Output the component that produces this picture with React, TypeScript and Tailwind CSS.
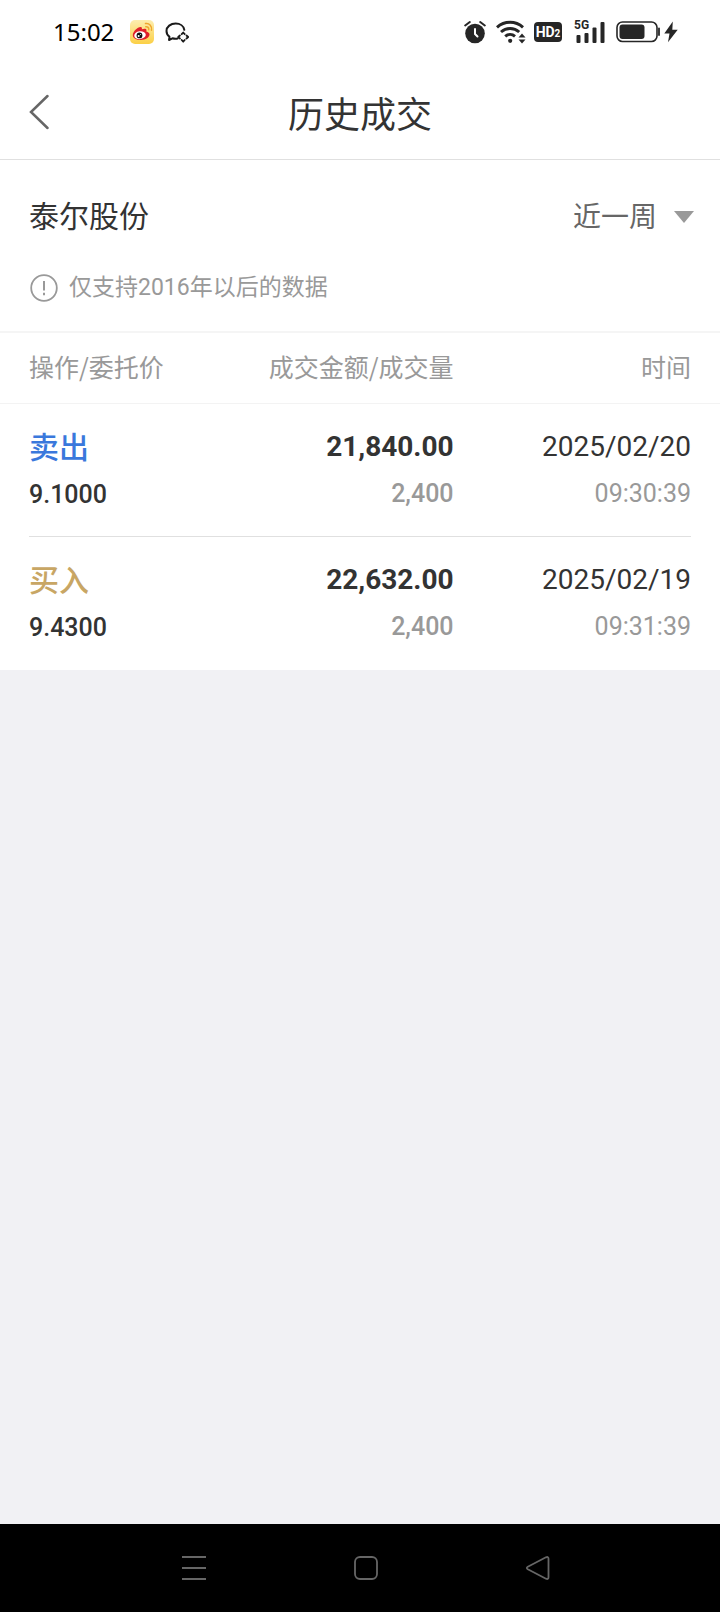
import { useState } from 'react'

interface Trade {
  side: 'buy' | 'sell'
  price: string
  amount: string
  volume: string
  date: string
  time: string
}

const trades: Trade[] = [
  { side: 'sell', price: '9.1000', amount: '21,840.00', volume: '2,400', date: '2025/02/20', time: '09:30:39' },
  { side: 'buy', price: '9.4300', amount: '22,632.00', volume: '2,400', date: '2025/02/19', time: '09:31:39' },
]

const ranges = ['近一周', '近一月', '近三月', '近一年']

function StatusBar() {
  return (
    <div className="h-16 pl-[53px] pr-[42px] flex items-center justify-between text-[#262626]">
      <div className="flex items-center">
        <span className="w-[77px] font-['Noto_Sans','Noto_Sans_CJK_SC',sans-serif] text-2xl text-black">15:02</span>

        {/* Weibo */}
        <svg className="w-6 h-6" viewBox="0 0 24 24">
          <defs>
            <linearGradient id="weibo" x1="0" y1="0" x2="0" y2="1">
              <stop offset="0" stopColor="#fdeeb0" />
              <stop offset="1" stopColor="#fbd046" />
            </linearGradient>
          </defs>
          <rect width="24" height="24" rx="5" fill="url(#weibo)" />
          <path d="M2.8 15.2c0-3.600 4.600-8.200 7.800-8.200 1.500 0 1.500 1.300 1.200 2.300 2-.8 4.700-1 4.700 1 0 .5-.3 1-.2 1.300 2 .5 3.200 1.500 3.200 3 0 3-3.900 5.400-8.700 5.400-4.400 0-8-1.900-8-4.800z" fill="#e0202a" />
          <ellipse cx="10" cy="15.200" rx="5.800" ry="3.900" fill="#fff" transform="rotate(-8 10 15.200)" />
          <circle cx="9.500" cy="15.400" r="2.900" fill="#111" />
          <circle cx="8.600" cy="16" r="1" fill="#fff" />
          <circle cx="10.600" cy="14.500" r=".5" fill="#fff" />
          <path d="M15.500 3.600c3.400-.8 6.800 2.200 6 6.600M15.800 6.700c1.900-.3 3.300 1.100 2.900 3.100" fill="none" stroke="#efa62f" strokeWidth="1.500" strokeLinecap="round" />
        </svg>

        {/* Chat with sparkle */}
        <svg className="w-6 h-6 ml-[11px]" viewBox="0 0 24 24" fill="none" stroke="#1a1a1a" strokeWidth="2" strokeLinejoin="round">
          <path d="M19.300 9.800C18.700 6 15 3.500 10.700 3.500 5.600 3.500 1.500 6.700 1.500 11c0 2.500 1.200 4.500 3 5.800L4 20l3.500-1.700c1.500.5 3.500.6 5.200.2" strokeLinecap="round" />
          <path d="M16.700 14.200l1.500-1.700 1.500 1.700M21.500 15.500l1.700 1.500-1.700 1.500M19.700 20l-1.500 1.700-1.500-1.700M14.900 18.500L13.200 17l1.700-1.500" strokeWidth="1.800" strokeLinecap="round" />
        </svg>
      </div>

      <div className="flex items-center">
        {/* Alarm */}
        <svg className="w-[22px] h-6" viewBox="0 0 22 24">
          <circle cx="11" cy="13.500" r="9.800" fill="currentColor" />
          <path d="M1.200 5.500L5.800 2M20.800 5.500L16.200 2" stroke="currentColor" strokeWidth="2" strokeLinecap="round" />
          <path d="M11 9v5l2.500 2.500" stroke="#fff" strokeWidth="2" strokeLinecap="round" strokeLinejoin="round" fill="none" />
        </svg>

        {/* Wifi */}
        <svg className="w-[30px] h-6 ml-2.5" viewBox="0 0 30 24" fill="none" stroke="currentColor" strokeWidth="3">
          <path d="M1 7.300c7.500-6.600 18.500-6.600 26 0M5 12c5.200-4.600 13-4.600 18.200 0M9.200 16.300c2.800-2.400 7-2.400 9.800 0" />
          <circle cx="14.200" cy="20.800" r="2.100" fill="currentColor" stroke="none" />
          <path d="M26 13.500l3.500 4h-7zM26 23.500l3.500-4h-7z" fill="currentColor" stroke="none" />
        </svg>

        {/* HD */}
        <div className="w-7 h-5 ml-2 rounded bg-[#262626] flex items-center justify-center font-[Roboto,sans-serif] font-bold text-white text-sm leading-5">
          HD<span className="text-[10px] leading-none pt-1">2</span>
        </div>

        {/* 5G signal */}
        <div className="relative w-8 h-6 ml-3">
          <span className="absolute left-0 -top-0.5 font-[Roboto,sans-serif] font-bold text-xs leading-[14px]">5G</span>
          <svg className="w-8 h-6" viewBox="0 0 32 24" fill="currentColor">
            <rect x="2.500" y="15" width="4" height="8" rx="1" />
            <rect x="10.500" y="13" width="4" height="10" rx="1" />
            <rect x="18.500" y="7.500" width="4" height="15.500" rx="1" />
            <rect x="26.500" y="2" width="4" height="21" rx="1" />
          </svg>
        </div>

        {/* Battery */}
        <svg className="w-11 h-6 ml-2.5" viewBox="0 0 44 24">
          <rect x="1" y="2" width="40" height="19.500" rx="5.500" fill="none" stroke="currentColor" strokeWidth="1.600" />
          <rect x="3.500" y="4.500" width="25" height="14.500" rx="3" fill="currentColor" />
          <path d="M43 8.500v6.500" stroke="currentColor" strokeWidth="1.800" strokeLinecap="round" />
        </svg>
        <svg className="w-3.5 h-6 ml-1" viewBox="0 0 14 24" fill="currentColor">
          <path d="M8.800 1.500L.3 13.500h5.200L4 22.300 13.700 9.800H8.300z" />
        </svg>
      </div>
    </div>
  )
}

function Header() {
  return (
    <header className="h-24 px-[29px] flex items-center justify-between border-b border-[#e0e0e0]">
      <button type="button" aria-label="返回" className="w-10 h-10">
        <svg className="w-5 h-9" viewBox="0 0 20 36" fill="none" stroke="#666" strokeWidth="2.500" strokeLinecap="round">
          <path d="M18.500 2L2 18 18.500 34" />
        </svg>
      </button>
      <h1 className="pt-2 text-4xl text-[#333]">历史成交</h1>
      <div className="w-10" />
    </header>
  )
}

function TradeRow({ trade, last }: { trade: Trade; last: boolean }) {
  const cell = `pt-5 pb-[18px] border-b ${last ? 'border-transparent' : 'border-[#e0e0e0]'}`
  return (
    <tr className="text-[#333]">
      <td className="pl-[29px] text-left">
        <div className={cell}>
          <div className={`text-3xl leading-[48px] font-medium ${trade.side === 'sell' ? 'text-[#3a78dc]' : 'text-[#c8a664]'}`}>
            {trade.side === 'sell' ? '卖出' : '买入'}
          </div>
          <div className="text-[25px] leading-[46px] font-medium">{trade.price}</div>
        </div>
      </td>
      <td className="text-right">
        <div className={cell}>
          <div className="text-[28px] leading-[46px] font-bold">{trade.amount}</div>
          <div className="text-[25px] leading-[48px] font-medium text-[#999]">{trade.volume}</div>
        </div>
      </td>
      <td className="pr-[29px] text-right">
        <div className={cell}>
          <div className="text-[28px] leading-[46px]">{trade.date}</div>
          <div className="text-[25px] leading-[48px] text-[#999]">{trade.time}</div>
        </div>
      </td>
    </tr>
  )
}

function NavBar() {
  return (
    <nav className="h-[88px] pl-[181px] pr-[169px] flex items-center justify-between bg-black">
      <button type="button" aria-label="菜单">
        <svg className="w-[26px] h-[26px]" viewBox="0 0 26 26" stroke="#666" strokeWidth="2">
          <path d="M1 2h24M1 13h24M1 24h24" />
        </svg>
      </button>
      <button type="button" aria-label="主页">
        <svg className="w-[26px] h-[26px]" viewBox="0 0 26 26" fill="none" stroke="#666" strokeWidth="1.800">
          <rect x="2" y="2" width="22" height="22" rx="5" />
        </svg>
      </button>
      <button type="button" aria-label="后退">
        <svg className="w-[26px] h-[26px]" viewBox="0 0 26 26" fill="none" stroke="#666" strokeWidth="1.800" strokeLinejoin="round">
          <path d="M2.800 11.700L21 2.300q2.500-1 2.500 1.500v18.400q0 2.500-2.500 1.500L2.800 14.300q-2-1.300 0-2.600z" />
        </svg>
      </button>
    </nav>
  )
}

export default function App() {
  const [range, setRange] = useState(ranges[0])

  return (
    <div className="min-h-screen bg-[#f1f1f4] flex flex-col font-[Roboto,'Noto_Sans_CJK_SC',sans-serif]">
      <div className="bg-white">
        <StatusBar />
        <Header />

        {/* Stock name + range */}
        <section className="pt-8 pb-[23px] border-b-2 border-[#f5f5f5]">
          <div className="pl-[29px] pr-[26px] flex items-center justify-between">
            <h2 className="text-3xl leading-[50px] text-[#333]">泰尔股份</h2>
            <div className="relative flex items-center">
              <select
                aria-label="时间范围"
                value={range}
                onChange={(e) => setRange(e.target.value)}
                className="appearance-none bg-transparent pt-0.5 pr-9 text-[28px] leading-12 text-[#666]"
              >
                {ranges.map((r) => (
                  <option key={r}>{r}</option>
                ))}
              </select>
              <svg className="absolute right-0 w-5 h-3 pointer-events-none" viewBox="0 0 20 12" fill="#999">
                <path d="M0 0h20L10 12z" />
              </svg>
            </div>
          </div>
          <p className="mt-[26px] px-[30px] flex items-center gap-[11px] text-[23px] leading-10 text-[#999]">
            <svg className="w-7 h-7" viewBox="0 0 28 28" fill="none" stroke="#999" strokeWidth="2">
              <circle cx="14" cy="14" r="12.800" strokeWidth="1.800" />
              <path d="M14 7v9.500M14 18.800v2.400" />
            </svg>
            仅支持2016年以后的数据
          </p>
        </section>

        {/* Trades */}
        <table className="w-full table-fixed border-collapse">
          <colgroup>
            <col className="w-[29%]" />
            <col className="w-[34%]" />
            <col className="w-[37%]" />
          </colgroup>
          <thead>
            <tr className="h-[70px] border-b border-[#f3f3f3] text-[#999] text-[25px] font-['Noto_Sans_CJK_SC',sans-serif]">
              <th className="pl-[29px] pb-0.5 text-left font-normal">操作/委托价</th>
              <th className="pb-0.5 text-right font-normal whitespace-nowrap">成交金额/成交量</th>
              <th className="pr-[29px] pb-0.5 text-right font-normal">时间</th>
            </tr>
          </thead>
          <tbody>
            {trades.map((trade, i) => (
              <TradeRow key={trade.date} trade={trade} last={i === trades.length - 1} />
            ))}
          </tbody>
        </table>
      </div>

      <div className="flex-1" />
      <NavBar />
    </div>
  )
}
